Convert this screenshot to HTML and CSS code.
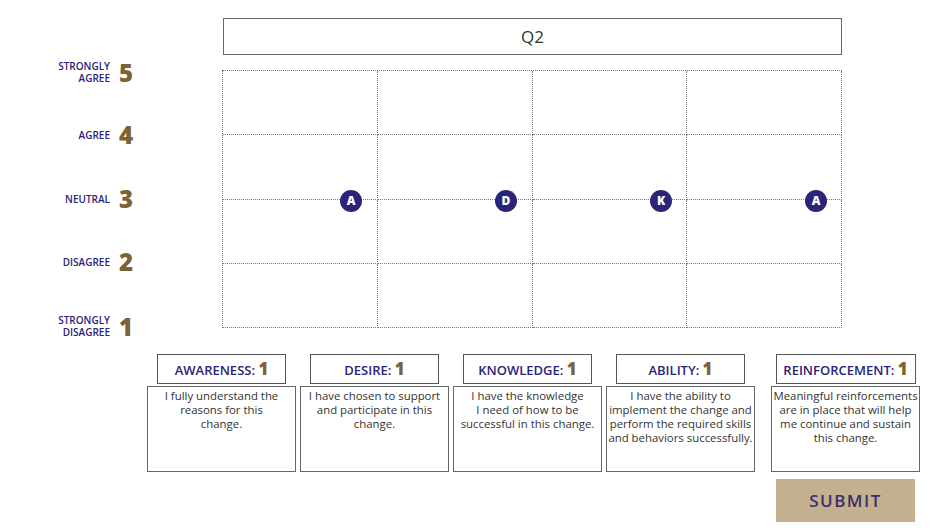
FILE: index.html
```html
<!DOCTYPE html>
<html lang="en">
<head>
    <meta charset="UTF-8">
    <meta name="viewport" content="width=device-width, initial-scale=1.0">
    <title>Change Readiness - Q2</title>
    <link rel="stylesheet" href="styles.css">
</head>
<body>
    <div class="page">
        <div class="top">
            <div class="axis">
                <div class="axis-row"><span class="axis-label">STRONGLY<br>AGREE</span><span class="axis-num">5</span></div>
                <div class="axis-row"><span class="axis-label">AGREE</span><span class="axis-num">4</span></div>
                <div class="axis-row"><span class="axis-label">NEUTRAL</span><span class="axis-num">3</span></div>
                <div class="axis-row"><span class="axis-label">DISAGREE</span><span class="axis-num">2</span></div>
                <div class="axis-row"><span class="axis-label">STRONGLY<br>DISAGREE</span><span class="axis-num">1</span></div>
            </div>

            <div class="chart">
                <div class="question">Q2</div>
                <div class="grid">
                    <div class="cell"></div><div class="cell"></div><div class="cell"></div><div class="cell"></div>
                    <div class="cell"></div><div class="cell"></div><div class="cell"></div><div class="cell"></div>
                    <div class="cell"></div><div class="cell"></div><div class="cell"></div><div class="cell"></div>
                    <div class="cell"></div><div class="cell"></div><div class="cell"></div><div class="cell"></div>

                    <!-- markers sit on the 'neutral' line -->
                    <span class="marker m1">A</span>
                    <span class="marker m2">D</span>
                    <span class="marker m3">K</span>
                    <span class="marker m4">A</span>
                </div>
            </div>
        </div>

        <div class="factors">
            <div class="factor">
                <div class="factor-head">AWARENESS: <b>1</b></div>
                <div class="factor-desc">I fully understand the<br>reasons for this<br>change.</div>
            </div>
            <div class="factor">
                <div class="factor-head">DESIRE: <b>1</b></div>
                <div class="factor-desc">I have chosen to support<br>and participate in this<br>change.</div>
            </div>
            <div class="factor">
                <div class="factor-head">KNOWLEDGE: <b>1</b></div>
                <div class="factor-desc">I have the knowledge<br>I need of how to be<br>successful in this change.</div>
            </div>
            <div class="factor">
                <div class="factor-head">ABILITY: <b>1</b></div>
                <div class="factor-desc">I have the ability to<br>implement the change and<br>perform the required skills<br>and behaviors successfully.</div>
            </div>
            <div class="factor factor-last">
                <div class="factor-head wide">REINFORCEMENT: <b>1</b></div>
                <div class="factor-desc">Meaningful reinforcements<br>are in place that will help<br>me continue and sustain<br>this change.</div>
                <button class="submit">SUBMIT</button>
            </div>
        </div>
    </div>
</body>
</html>
```

FILE: styles.css
```css
* {
    margin: 0;
    padding: 0;
    box-sizing: border-box;
}

body {
    background: #fff;
    font-family: 'Open Sans', 'Noto Sans', sans-serif;
    color: #333;
}

.page {
    width: 940px;
    height: 528px;
    padding-top: 18px;
}

.top {
    display: flex;
    height: 310px;
}

/* Y axis labels */
.axis {
    width: 222px;
    padding-top: 22px;
    display: flex;
    flex-direction: column;
}

.axis-row {
    height: 63.5px;
    flex-shrink: 0;
    display: grid;
    grid-template-columns: 110px 26px;
    align-items: center;
    column-gap: 9px;
}

.axis-label {
    text-align: right;
    font-size: 10px;
    font-weight: 600;
    line-height: 12px;
    color: #2c2478;
}

.axis-num {
    font-size: 24px;
    font-weight: 800;
    color: #7d6233;
    line-height: 24px;
}

.axis-row:first-child .axis-num,
.axis-row:last-child .axis-num {
    margin-top: 2px;
}

/* Chart */
.chart {
    width: 620px;
}

.question {
    height: 37px;
    margin-left: 1px;
    border: 1px solid #6a6a6a;
    text-align: center;
    font-size: 17px;
    line-height: 35px;
    color: #333;
}

.grid {
    position: relative;
    margin-top: 15px;
    height: 258px;
    display: grid;
    grid-template-columns: repeat(4, 1fr);
    grid-template-rows: repeat(4, 1fr);
    border-top: 1px dotted #777;
    border-left: 1px dotted #777;
}

.cell {
    border-right: 1px dotted #777;
    border-bottom: 1px dotted #777;
}

.marker {
    position: absolute;
    top: 119px;
    width: 22px;
    height: 22px;
    border-radius: 50%;
    background: #2c2478;
    color: #fff;
    font-size: 12px;
    font-weight: 800;
    line-height: 22px;
    text-align: center;
}

.m1 { left: 117px; }
.m2 { left: 272px; }
.m3 { left: 427px; }
.m4 { left: 582px; }

/* Factors */
.factors {
    display: flex;
    gap: 4px;
    margin-top: 26px;
    padding-left: 147px;
}

.factor {
    width: 149px;
    display: flex;
    flex-direction: column;
    align-items: center;
}

.factor-last {
    margin-left: 12px;
}

.factor-head {
    width: 129px;
    height: 30px;
    border: 1px solid #555;
    text-align: center;
    font-size: 13px;
    font-weight: 600;
    line-height: 28px;
    color: #2c2478;
}

.factor-head.wide {
    width: 140px;
}

.factor-head b {
    font-size: 17px;
    font-weight: 800;
    color: #7d6233;
}

.factor-desc {
    width: 149px;
    height: 86px;
    margin-top: 2px;
    border: 1px solid #666;
    padding-top: 2px;
    text-align: center;
    font-size: 11.4px;
    line-height: 14px;
    white-space: nowrap;
    color: #333;
}

.submit {
    width: 139px;
    height: 43px;
    margin-top: 7px;
    border: none;
    background: #c4b08f;
    color: #3b2f6b;
    font-family: 'Open Sans', 'Noto Sans', sans-serif;
    font-size: 17px;
    font-weight: 600;
    letter-spacing: 1.5px;
}
```
